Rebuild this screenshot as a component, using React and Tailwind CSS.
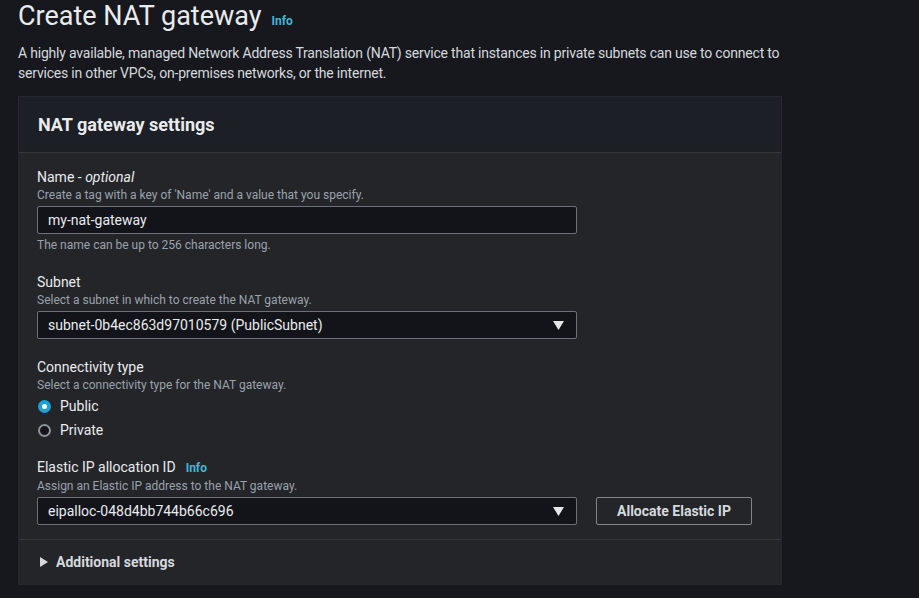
import React from "react";

const Label = ({ children, info }) => (
  <div className="flex items-baseline gap-2.5 text-[14px] leading-[19px] text-[#e9ebed]">
    <span>{children}</span>
    {info && <span className="text-[12px] font-bold text-[#42b4d8]">Info</span>}
  </div>
);

const Desc = ({ children }) => (
  <div className="text-[12px] leading-4 text-[#9ba2ab]">{children}</div>
);

const Select = ({ value }) => (
  <div className="mt-[3px] flex h-[28px] w-[540px] items-center justify-between rounded-[2px] border border-[#6c7179] bg-[#121419] pl-[10px] pr-[12px] text-[14px] text-[#e9ebed]">
    <span>{value}</span>
    <svg width="11" height="9" viewBox="0 0 11 9">
      <path d="M0 0 H11 L5.5 9 Z" fill="#e4e6e8" />
    </svg>
  </div>
);

const Radio = ({ checked, label }) => (
  <div className="flex h-5 items-center gap-[9px] text-[14px] text-[#e9ebed]">
    {checked ? (
      <span className="ml-[1px] flex h-[13px] w-[13px] items-center justify-center rounded-full bg-[#1aa1d6]">
        <span className="h-[5px] w-[5px] rounded-full bg-white" />
      </span>
    ) : (
      <span className="ml-[1px] h-[13px] w-[13px] rounded-full border-2 border-[#8f949b] bg-[#14161b]" />
    )}
    <span>{label}</span>
  </div>
);

export default function App() {
  return (
    <div
      className="min-h-screen bg-[#16181d] pl-[18px]"
      style={{ fontFamily: "Roboto, 'Liberation Sans', sans-serif" }}
    >
      {/* Title */}
      <div className="flex items-baseline gap-[10px]">
        <h1 className="text-[27px] leading-[32px] text-[#e9ebed]">Create NAT gateway</h1>
        <span className="text-[12px] font-bold text-[#42b4d8]">Info</span>
      </div>
      <p className="mt-[11px] w-[800px] text-[14px] leading-5 tracking-[-0.2px] text-[#d5d9dd]">
        A highly available, managed Network Address Translation (NAT) service that
        instances in private subnets can use to connect to services in other VPCs,
        on-premises networks, or the internet.
      </p>

      {/* Settings panel */}
      <div className="mt-[13px] w-[764px] border border-[#25282e] bg-[#232529]">
        <div className="flex h-[56px] items-center border-b border-[#33363c] bg-[#1c1f26] px-[19px]">
          <h2 className="text-[18px] font-bold text-[#e9ebed]">NAT gateway settings</h2>
        </div>

        <div className="px-[18px] pb-[14px] pt-[15px]">
          <Label>
            Name - <i>optional</i>
          </Label>
          <Desc>Create a tag with a key of 'Name' and a value that you specify.</Desc>
          <div className="mt-[3px] flex h-[28px] w-[540px] items-center rounded-[2px] border border-[#6c7179] bg-[#121419] pl-[10px] text-[14px] text-[#e9ebed]">
            my-nat-gateway
          </div>
          <div className="mt-[3px] text-[12px] leading-4 text-[#9ba2ab]">
            The name can be up to 256 characters long.
          </div>

          <div className="mt-[20px]">
            <Label>Subnet</Label>
            <Desc>Select a subnet in which to create the NAT gateway.</Desc>
            <Select value="subnet-0b4ec863d97010579 (PublicSubnet)" />
          </div>

          <div className="mt-[19px]">
            <Label>Connectivity type</Label>
            <Desc>Select a connectivity type for the NAT gateway.</Desc>
            <div className="mt-[3px] flex flex-col gap-[4px]">
              <Radio checked label="Public" />
              <Radio label="Private" />
            </div>
          </div>

          <div className="mt-[18px]">
            <Label info>Elastic IP allocation ID</Label>
            <Desc>Assign an Elastic IP address to the NAT gateway.</Desc>
            <div className="flex items-end gap-[19px]">
              <Select value="eipalloc-048d4bb744b66c696" />
              <button className="h-[28px] w-[156px] rounded-[2px] border border-[#80858c] text-[14px] font-bold text-[#d5d9dd]">
                Allocate Elastic IP
              </button>
            </div>
          </div>
        </div>

        <div className="flex h-[45px] items-center gap-[8px] border-t border-[#33363c] px-[21px] text-[14px] font-bold text-[#d5d9dd]">
          <svg width="8" height="10" viewBox="0 0 8 10">
            <path d="M0 0 L8 5 L0 10 Z" fill="#d5d9dd" />
          </svg>
          <span>Additional settings</span>
        </div>
      </div>
    </div>
  );
}
